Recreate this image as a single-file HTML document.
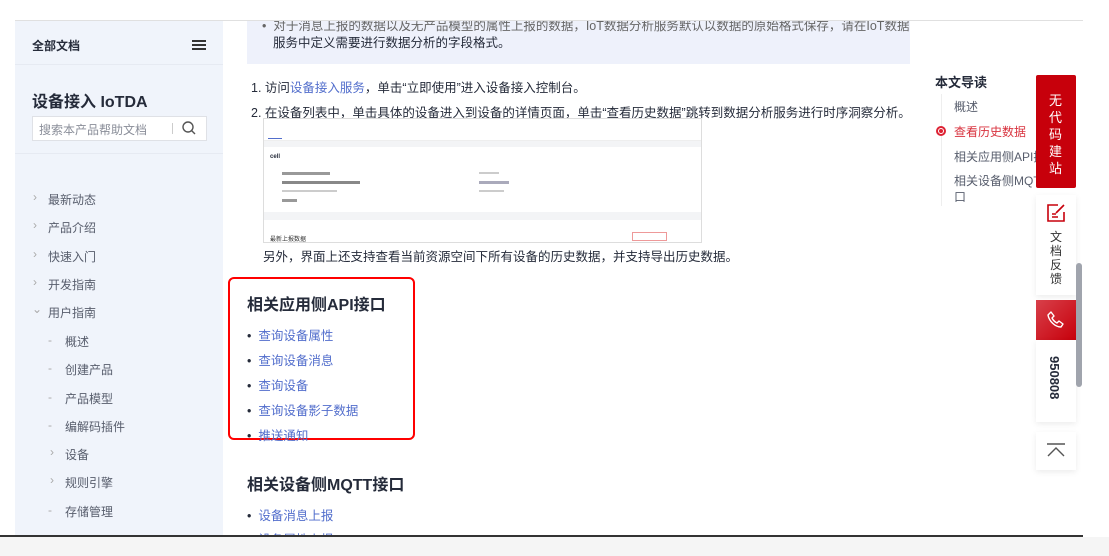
<!DOCTYPE html>
<html><head><meta charset="utf-8"><style>
*{margin:0;padding:0;box-sizing:border-box}
body{width:1109px;height:556px;position:relative;overflow:hidden;background:#fff;font-family:"Liberation Sans","Noto Sans CJK SC",sans-serif;color:#252b3a}
.a{position:absolute;white-space:nowrap}
.side{position:absolute;left:15px;top:21px;width:208px;height:514px;background:#f0f4fb}
.mi{position:absolute;font-size:12px;color:#575d6c}
.lk{color:#526ecc}
.t{font-size:12.5px;color:#252b3a}
</style></head><body>
<div class="side"></div>
<div class="a" style="left:32px;top:37px;font-size:12px;font-weight:bold">全部文档</div>
<div class="a" style="left:192px;top:40px;width:14px;height:2px;background:#333;box-shadow:0 4px 0 #333,0 8px 0 #333"></div>
<div class="a" style="left:15px;top:64px;width:208px;height:1px;background:#e6eaf2"></div>
<div class="a" style="left:32px;top:88px;font-size:16px;font-weight:bold">设备接入 IoTDA</div>
<div class="a" style="left:32px;top:116px;width:175px;height:25px;background:#fff;border:1px solid #dfe1e6"></div>
<div class="a" style="left:39px;top:121px;font-size:12px;color:#8a8e99">搜索本产品帮助文档</div>
<div class="a" style="left:172px;top:123px;width:1px;height:11px;background:#ccc"></div>
<svg class="a" style="left:181px;top:120px" width="16" height="16" viewBox="0 0 16 16"><circle cx="7" cy="7" r="5" fill="none" stroke="#555" stroke-width="1.4"/><path d="M10.5 10.5L14 14" stroke="#555" stroke-width="1.4"/></svg>
<div class="a" style="left:15px;top:153px;width:208px;height:1px;background:#e6eaf2"></div>
<div class="mi" style="left:33px;top:190px;color:#aaa">›</div><div class="mi" style="left:48px;top:191px">最新动态</div>
<div class="mi" style="left:33px;top:218px;color:#aaa">›</div><div class="mi" style="left:48px;top:219px">产品介绍</div>
<div class="mi" style="left:33px;top:247px;color:#aaa">›</div><div class="mi" style="left:48px;top:248px">快速入门</div>
<div class="mi" style="left:33px;top:275px;color:#aaa">›</div><div class="mi" style="left:48px;top:276px">开发指南</div>
<div class="mi" style="left:32px;top:302px;color:#aaa">⌄</div><div class="mi" style="left:48px;top:304px">用户指南</div>
<div class="mi" style="left:48px;top:333px;color:#aaa">-</div><div class="mi" style="left:65px;top:333px">概述</div>
<div class="mi" style="left:48px;top:361px;color:#aaa">-</div><div class="mi" style="left:65px;top:361px">创建产品</div>
<div class="mi" style="left:48px;top:390px;color:#aaa">-</div><div class="mi" style="left:65px;top:390px">产品模型</div>
<div class="mi" style="left:48px;top:418px;color:#aaa">-</div><div class="mi" style="left:65px;top:418px">编解码插件</div>
<div class="mi" style="left:50px;top:445px;color:#aaa">›</div><div class="mi" style="left:65px;top:446px">设备</div>
<div class="mi" style="left:50px;top:473px;color:#aaa">›</div><div class="mi" style="left:65px;top:474px">规则引擎</div>
<div class="mi" style="left:48px;top:503px;color:#aaa">-</div><div class="mi" style="left:65px;top:503px">存储管理</div>

<div class="a" style="left:247px;top:21px;width:663px;height:43px;background:#eef1fb;overflow:hidden">
 <div class="a t" style="left:15px;top:-6px;color:#666">•&nbsp; 对于消息上报的数据以及无产品模型的属性上报的数据，IoT数据分析服务默认以数据的原始格式保存，请在IoT数据分析</div>
 <div class="a t" style="left:26px;top:11px">服务中定义需要进行数据分析的字段格式。</div>
</div>
<div class="a" style="left:15px;top:20px;width:1068px;height:1px;background:#e0e0e0"></div>
<div class="a t" style="left:251px;top:77px">1. 访问<span class="lk">设备接入服务</span>，单击“立即使用”进入设备接入控制台。</div>
<div class="a t" style="left:251px;top:102px">2. 在设备列表中，单击具体的设备进入到设备的详情页面，单击“查看历史数据”跳转到数据分析服务进行时序洞察分析。</div>
<div class="a" style="left:263px;top:118px;width:439px;height:125px;border:1px solid #ddd;background:#fff">
 <div style="position:absolute;left:0;top:21px;width:437px;height:1px;background:#eee"></div>
 <div style="position:absolute;left:0;top:22px;width:437px;height:6px;background:#f3f4f6"></div>
 <div style="position:absolute;left:0;top:93px;width:437px;height:8px;background:#f3f4f6"></div>
 <div style="position:absolute;left:4px;top:19px;width:14px;height:1px;background:#526ecc"></div>
 <div style="position:absolute;left:6px;top:35px;font-size:6px;font-weight:bold">cell</div>
 <div style="position:absolute;left:6px;top:115px;font-size:6px;color:#333">最新上报数据</div>
 <div style="position:absolute;left:368px;top:113px;width:35px;height:9px;border:1px solid #e99"></div>
 <div style="position:absolute;left:18px;top:53px;width:48px;height:3px;background:#999"></div>
 <div style="position:absolute;left:18px;top:62px;width:78px;height:3px;background:#888"></div>
 <div style="position:absolute;left:18px;top:71px;width:55px;height:2px;background:#ccc"></div>
 <div style="position:absolute;left:18px;top:80px;width:15px;height:3px;background:#999"></div>
 <div style="position:absolute;left:215px;top:53px;width:20px;height:2px;background:#ccc"></div>
 <div style="position:absolute;left:215px;top:62px;width:30px;height:3px;background:#aab"></div>
 <div style="position:absolute;left:215px;top:71px;width:25px;height:2px;background:#ccc"></div>
</div>
<div class="a t" style="left:263px;top:246px">另外，界面上还支持查看当前资源空间下所有设备的历史数据，并支持导出历史数据。</div>

<div class="a" style="left:228px;top:277px;width:187px;height:163px;border:2px solid #f00;border-radius:6px"></div>
<div class="a" style="left:247px;top:291px;font-size:16px;font-weight:bold">相关应用侧API接口</div>
<div class="a t" style="left:247px;top:325px">•&nbsp; <span class="lk">查询设备属性</span></div>
<div class="a t" style="left:247px;top:350px">•&nbsp; <span class="lk">查询设备消息</span></div>
<div class="a t" style="left:247px;top:375px">•&nbsp; <span class="lk">查询设备</span></div>
<div class="a t" style="left:247px;top:400px">•&nbsp; <span class="lk">查询设备影子数据</span></div>
<div class="a t" style="left:247px;top:425px">•&nbsp; <span class="lk">推送通知</span></div>
<div class="a" style="left:247px;top:471px;font-size:16px;font-weight:bold">相关设备侧MQTT接口</div>
<div class="a t" style="left:247px;top:505px">•&nbsp; <span class="lk">设备消息上报</span></div>
<div class="a t" style="left:247px;top:529px">•&nbsp; <span class="lk">设备属性上报</span></div>

<div class="a" style="left:935px;top:72px;font-size:13px;font-weight:bold">本文导读</div>
<div class="a" style="left:941px;top:94px;width:1px;height:112px;background:#eee"></div>
<div class="a" style="left:954px;top:98px;font-size:12px;color:#575d6c">概述</div>
<div class="a" style="left:936px;top:126px;width:10px;height:10px;border-radius:50%;border:2px solid #d23;background:#fff"></div>
<div class="a" style="left:939px;top:129px;width:4px;height:4px;border-radius:50%;background:#d23"></div>
<div class="a" style="left:954px;top:123px;font-size:12px;color:#d8323e">查看历史数据</div>
<div class="a" style="left:954px;top:148px;font-size:12px;color:#575d6c">相关应用侧API接口</div>
<div class="a" style="left:954px;top:173px;font-size:12px;color:#575d6c;width:110px;white-space:normal;line-height:16px">相关设备侧MQTT接口</div>

<div class="a" style="left:1036px;top:75px;width:40px;height:113px;background:#c7000b;border-radius:2px"></div>
<div class="a" style="left:1049px;top:92px;width:14px;font-size:13px;line-height:17px;color:#fff;white-space:normal">无代码建站</div>
<div class="a" style="left:1036px;top:195px;width:40px;height:100px;background:#fff;box-shadow:0 2px 6px rgba(0,0,0,.08)"></div>
<svg class="a" style="left:1046px;top:203px" width="20" height="20" viewBox="0 0 20 20"><path d="M12 2H2v16h16V9" fill="none" stroke="#c7000b" stroke-width="1.6"/><path d="M6 11h4M6 14h6M10 10l8-8" fill="none" stroke="#c7000b" stroke-width="1.6"/></svg>
<div class="a" style="left:1050px;top:230px;width:13px;font-size:12px;line-height:14px;color:#333;white-space:normal">文档反馈</div>
<div class="a" style="left:1036px;top:300px;width:40px;height:40px;background:linear-gradient(135deg,#d8404a,#c7000b)"></div>
<svg class="a" style="left:1046px;top:310px" width="20" height="20" viewBox="0 0 20 20"><path d="M5 2l3 4-2 2c1 2 3 4 5 5l2-2 4 3-2 3C9 17 3 11 2 5z" fill="none" stroke="#fff" stroke-width="1.4" stroke-linejoin="round"/></svg>
<div class="a" style="left:1036px;top:340px;width:40px;height:82px;background:#fff;box-shadow:0 2px 6px rgba(0,0,0,.08)"></div>
<div class="a" style="left:1048px;top:356px;font-size:13px;font-weight:bold;color:#252b3a;transform-origin:0 0;transform:rotate(90deg) translate(0,-14px)">950808</div>
<div class="a" style="left:1076px;top:263px;width:6px;height:124px;background:#a0a4ad;border-radius:3px"></div>
<div class="a" style="left:1036px;top:432px;width:40px;height:38px;background:#fff;box-shadow:0 2px 6px rgba(0,0,0,.08)"></div>
<svg class="a" style="left:1046px;top:442px" width="20" height="16" viewBox="0 0 20 16"><path d="M1 2h18M2 14l8-8 8 8" fill="none" stroke="#555" stroke-width="1.4"/></svg>

<div class="a" style="left:0;top:535px;width:1083px;height:2px;background:#333"></div>
<div class="a" style="left:0;top:537px;width:1109px;height:19px;background:#f5f5f5"></div>
</body></html>
